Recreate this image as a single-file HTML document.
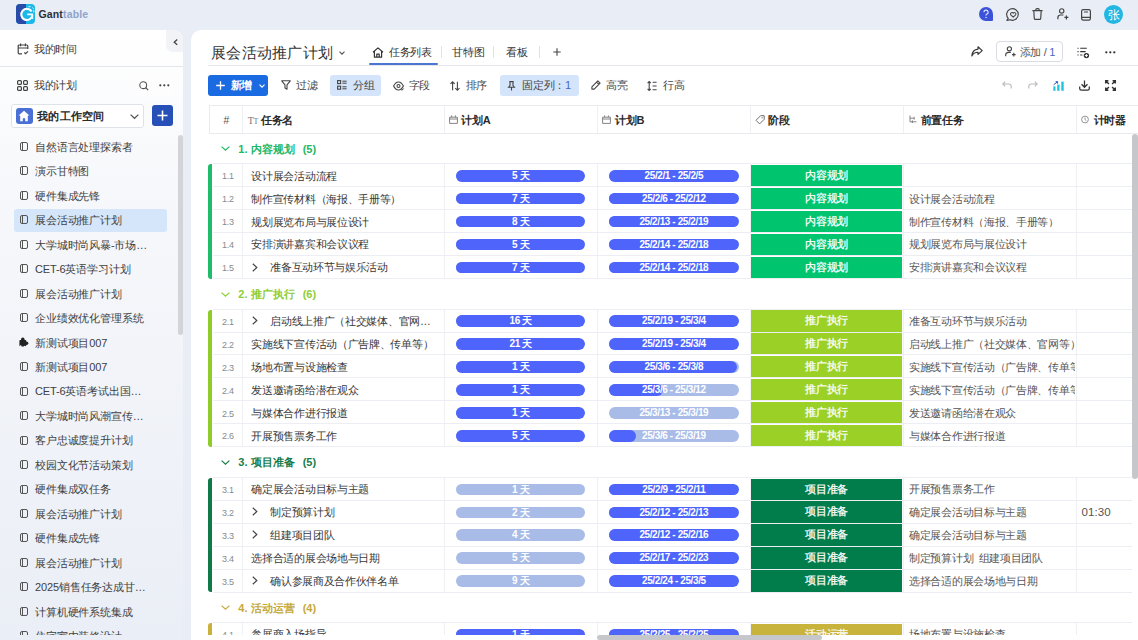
<!DOCTYPE html>
<html><head><meta charset="utf-8">
<style>
*{box-sizing:border-box;margin:0;padding:0}
html,body{width:1138px;height:640px;overflow:hidden}
body{position:relative;background:#e9edf5;font-family:"Liberation Sans",sans-serif;color:#333;font-size:11px}
.a{position:absolute}
svg{position:absolute;overflow:visible}
.t{position:absolute;white-space:nowrap;line-height:1;letter-spacing:-0.3px}
/* sidebar */
#side{left:0;top:30px;width:183.3px;height:610px;border-top-right-radius:9px;background:linear-gradient(180deg,#ffffff 0%,#f7f8fb 25%,#eaeef6 100%);overflow:hidden}
#main{left:190.8px;top:30px;width:947.2px;height:610px;border-top-left-radius:10px;background:#fff;overflow:hidden}
.si{position:absolute;left:0;width:183px;height:24.5px}
.si .ic{position:absolute;left:19.5px;top:7.5px;width:8px;height:9px;border:1.3px solid #555;border-radius:2px}
.si .ic:after{content:"";position:absolute;left:1.5px;top:0;width:1.2px;height:100%;background:#555}
.si .tx{position:absolute;left:35px;top:7.3px;font-size:11px;color:#404040;white-space:nowrap;line-height:1;letter-spacing:-0.15px}
.tb{position:absolute;font-size:11.5px;color:#333;white-space:nowrap;line-height:1}
.th{font-size:11px;font-weight:700;color:#2a2a2a}
.gh{font-size:11px;font-weight:bold;letter-spacing:0}
.gn{margin-left:2px}
.num{font-size:9px;color:#8a8a8a}
.nm{font-size:10.8px;color:#383838}
.pre{font-size:10.8px;color:#555}
.tm{font-size:11.5px;color:#555;letter-spacing:0.1px}
.bar{height:11.5px;border-radius:6px;background:#a9bce8;overflow:hidden}
.bar .fill{position:absolute;left:0;top:0;height:100%;background:#4e64fb;border-radius:0 6px 6px 0}
.bar .bt{position:absolute;left:0;top:0;width:100%;text-align:center;font-size:10px;line-height:11.5px;font-weight:bold;color:#fff;white-space:nowrap;letter-spacing:-0.4px}
.stg{font-size:11px;font-weight:500;color:#fff;text-align:center;line-height:21px;white-space:nowrap;letter-spacing:-0.3px;-webkit-text-stroke:0.25px #fff}
</style></head><body>

<!-- top bar -->
<div class="a" style="left:15.5px;top:4.2px;width:19.8px;height:19.4px;border-radius:4px;overflow:hidden;background:#1cb8e8">
  <div class="a" style="left:0;top:0;width:10px;height:19.4px;background:#2a4aa8"></div>
  <svg width="20" height="20" viewBox="0 0 20 20" style="left:0;top:0"><circle cx="10.8" cy="10.6" r="5" fill="#1cb8e8"/><path d="M15.6 7.4A5.6 5.6 0 1 0 16.4 11.4" fill="none" stroke="#fff" stroke-width="2.1"/><path d="M11.2 10.4H16.2V15" fill="none" stroke="#f0fbff" stroke-width="1.9"/><path d="M12.4 2.6H14.6M16.4 3.4L17.6 4.8M17.8 6.2V8.4" stroke="#e8f8ff" stroke-width="0.9"/></svg>
</div>
<div class="t" style="left:38.5px;top:9px;font-size:10.5px;font-weight:bold;color:#2b2f3a;letter-spacing:0.15px">Gant<span style="color:#8fa3cc">table</span></div>



<!-- top right icons -->
<div class="a" style="left:978.8px;top:7px;width:14px;height:14px;border-radius:7px 7px 1px 7px;background:#3c52d9"></div><svg width="14" height="14" viewBox="0 0 14 14" style="left:978.8px;top:7px"><path d="M4.9 5.2A2.1 2.1 0 1 1 7.6 7.2C7.1 7.5 7 7.9 7 8.6" fill="none" stroke="#dfe6ff" stroke-width="1.2"/><circle cx="7" cy="10.6" r="0.75" fill="#dfe6ff"/></svg>
<svg width="14" height="13" viewBox="0 0 14 13" style="left:1006px;top:7.6px"><path d="M2.2 10.4A5.8 5.8 0 1 1 4.2 11.8L0.9 12.4Z" fill="none" stroke="#444" stroke-width="1.15" stroke-linejoin="round"/><path d="M7.2 9.2L4.8 6.9A1.4 1.4 0 1 1 7.2 5.2A1.4 1.4 0 1 1 9.6 6.9Z" fill="none" stroke="#444" stroke-width="1.05" stroke-linejoin="round"/></svg>
<svg width="11" height="12" viewBox="0 0 11 12" style="left:1031.6px;top:8px"><path d="M0.4 2.6H10.6M3.8 2.6V1.6A1.1 1.1 0 0 1 4.9 0.6H6.1A1.1 1.1 0 0 1 7.2 1.6V2.6M1.8 2.6L2.3 10.6A0.9 0.9 0 0 0 3.2 11.4H7.8A0.9 0.9 0 0 0 8.7 10.6L9.2 2.6" fill="none" stroke="#444" stroke-width="1.15" stroke-linejoin="round"/></svg>
<svg width="12" height="12" viewBox="0 0 12 12" style="left:1057px;top:8.3px"><circle cx="4.7" cy="2.9" r="2.2" fill="none" stroke="#444" stroke-width="1.15"/><path d="M0.9 11.2V9.6C0.9 8 2.1 7 3.6 7H6.4M7.4 9.4H11.4M9.4 7.4V11.4" fill="none" stroke="#444" stroke-width="1.2"/></svg>
<svg width="10" height="12" viewBox="0 0 10 12" style="left:1081px;top:8.5px"><rect x="0.6" y="0.6" width="8.8" height="10.6" rx="1.6" fill="none" stroke="#444" stroke-width="1.2"/><path d="M0.6 8.4H9.4M3 3H7" stroke="#444" stroke-width="1.15"/></svg>
<div class="a" style="left:1103.8px;top:4.6px;width:19.4px;height:19.4px;border-radius:50%;background:#22b6e2"></div>
<div class="t" style="left:1107.5px;top:8.5px;font-size:12px;color:#fff;letter-spacing:0">张</div>

<div id="side" class="a">
  <!-- collapse -->
  <div class="a" style="left:166px;top:0;width:17.3px;height:22.4px;background:#f1f3f7;border-bottom-left-radius:7px"></div>
  <svg width="6" height="7" viewBox="0 0 6 7" style="left:173.4px;top:9.3px"><path d="M4.2 0.6L1.2 3.2L4.2 5.8" fill="none" stroke="#444" stroke-width="1.3"/></svg>
  <!-- my time -->
  <svg width="12" height="12" viewBox="0 0 12 12" style="left:16.5px;top:13px"><path d="M5 10.8H2.2a1 1 0 0 1-1-1V3a1 1 0 0 1 1-1h7.6a1 1 0 0 1 1 1v3M1.2 5h9.6M3.6 0.6v2.6M8.4 0.6v2.6M7.3 9.5l1.3 1.2l2.4-2.4" fill="none" stroke="#444" stroke-width="1.2"/></svg>
  <div class="t" style="left:34px;top:14px;font-size:11px;color:#3a3a3a">我的时间</div>
  <div class="a" style="left:0;top:36px;width:183.3px;height:1px;background:#e3e6ec"></div>
  <!-- my plan -->
  <svg width="11" height="11" viewBox="0 0 11 11" style="left:16.7px;top:50.3px"><rect x="0.6" y="0.6" width="3.8" height="3.8" rx="1" fill="none" stroke="#444" stroke-width="1.2"/><rect x="6.6" y="0.6" width="3.8" height="3.8" rx="1" fill="none" stroke="#444" stroke-width="1.2"/><rect x="0.6" y="6.6" width="3.8" height="3.8" rx="1" fill="none" stroke="#444" stroke-width="1.2"/><rect x="6.6" y="6.6" width="3.8" height="3.8" rx="1" fill="none" stroke="#444" stroke-width="1.2"/></svg>
  <div class="t" style="left:34px;top:50.3px;font-size:11px;color:#3a3a3a">我的计划</div>
  <div class="a" style="left:136px;top:44px;width:36.5px;height:22.7px;background:#fdfdfe;border-radius:3px"></div>
  <svg width="10" height="10" viewBox="0 0 10 10" style="left:139px;top:50.8px"><circle cx="4.2" cy="4.2" r="3.4" fill="none" stroke="#555" stroke-width="1.1"/><path d="M6.7 6.7L9.2 9.2" stroke="#555" stroke-width="1.2"/></svg>
  <svg width="11" height="3" viewBox="0 0 11 3" style="left:159px;top:54.3px"><circle cx="1.3" cy="1.3" r="1.1" fill="#444"/><circle cx="5.3" cy="1.3" r="1.1" fill="#444"/><circle cx="9.3" cy="1.3" r="1.1" fill="#444"/></svg>
  <!-- workspace -->
  <div class="a" style="left:11.3px;top:74px;width:133px;height:23.5px;border:1px solid #dfe2e8;border-radius:3px;background:#fff"></div>
  <div class="a" style="left:16px;top:77.5px;width:16.5px;height:16.5px;border-radius:3px;background:#4a70d6"></div>
  <svg width="12" height="12" viewBox="0 0 12 12" style="left:18.3px;top:79.6px"><path d="M6 0.8L0.6 5.6H2.2V11.2H4.8V8.2H7.2V11.2H9.8V5.6H11.4Z" fill="#fff"/></svg>
  <div class="t" style="left:37px;top:80.6px;font-size:11.3px;font-weight:600;color:#2a2a2a;letter-spacing:0.3px">我的工作空间</div>
  <svg width="9" height="5" viewBox="0 0 9 5" style="left:129.8px;top:83.5px"><path d="M0.6 0.6L4.5 4.3L8.4 0.6" fill="none" stroke="#555" stroke-width="1.2"/></svg>
  <div class="a" style="left:151.5px;top:75.4px;width:21px;height:21px;border-radius:3px;background:#2650b8"></div>
  <svg width="11" height="11" viewBox="0 0 11 11" style="left:156.5px;top:80.4px"><path d="M5.5 0.5V10.5M0.5 5.5H10.5" stroke="#fff" stroke-width="1.6"/></svg>
  <!-- scrollbar -->
  <div class="a" style="left:177.5px;top:104.6px;width:5.8px;height:200.5px;border-radius:3px;background:#d3d4d7"></div>
  <div class="a" style="left:0;top:104px;width:177px;height:500.7px;overflow:hidden">
  <div class="a" style="left:0;top:-104px;width:183px;height:700px">
<div class="si" style="top:104.45px"><div class="ic"></div><div class="tx">自然语言处理探索者</div></div>
<div class="si" style="top:128.92px"><div class="ic"></div><div class="tx">演示甘特图</div></div>
<div class="si" style="top:153.39px"><div class="ic"></div><div class="tx">硬件集成先锋</div></div>
<div class="si" style="top:177.86px"><div class="a" style="left:14.2px;top:1px;width:152.5px;height:23.5px;background:#d5e6fb;border-radius:3px"></div><div class="ic"></div><div class="tx">展会活动推广计划</div></div>
<div class="si" style="top:202.33px"><div class="ic"></div><div class="tx">大学城时尚风暴-市场…</div></div>
<div class="si" style="top:226.80px"><div class="ic"></div><div class="tx">CET-6英语学习计划</div></div>
<div class="si" style="top:251.27px"><div class="ic"></div><div class="tx">展会活动推广计划</div></div>
<div class="si" style="top:275.74px"><div class="ic"></div><div class="tx">企业绩效优化管理系统</div></div>
<div class="si" style="top:300.21px"><svg width="10" height="10" viewBox="0 0 10 10" style="left:19px;top:6.8px"><rect x="0.4" y="3" width="6.8" height="6.4" rx="0.8" fill="#222"/><circle cx="3.8" cy="2.4" r="1.8" fill="#222"/><circle cx="7.6" cy="6.2" r="1.7" fill="#222"/><circle cx="1.6" cy="9.2" r="1" fill="#f1f3f8"/><circle cx="5.8" cy="9.6" r="0.9" fill="#f1f3f8"/></svg><div class="tx">新测试项目007</div></div>
<div class="si" style="top:324.68px"><div class="ic"></div><div class="tx">新测试项目007</div></div>
<div class="si" style="top:349.15px"><div class="ic"></div><div class="tx">CET-6英语考试出国…</div></div>
<div class="si" style="top:373.62px"><div class="ic"></div><div class="tx">大学城时尚风潮宣传…</div></div>
<div class="si" style="top:398.09px"><div class="ic"></div><div class="tx">客户忠诚度提升计划</div></div>
<div class="si" style="top:422.56px"><div class="ic"></div><div class="tx">校园文化节活动策划</div></div>
<div class="si" style="top:447.03px"><div class="ic"></div><div class="tx">硬件集成双任务</div></div>
<div class="si" style="top:471.50px"><div class="ic"></div><div class="tx">展会活动推广计划</div></div>
<div class="si" style="top:495.97px"><div class="ic"></div><div class="tx">硬件集成先锋</div></div>
<div class="si" style="top:520.44px"><div class="ic"></div><div class="tx">展会活动推广计划</div></div>
<div class="si" style="top:544.91px"><div class="ic"></div><div class="tx">2025销售任务达成甘…</div></div>
<div class="si" style="top:569.38px"><div class="ic"></div><div class="tx">计算机硬件系统集成</div></div>
<div class="si" style="top:593.85px"><div class="ic"></div><div class="tx">住宅室内装修设计</div></div>
  </div></div>
</div>

<div id="main" class="a"></div>

<!-- main header -->
<div class="t" style="left:211px;top:45px;font-size:15px;color:#333;letter-spacing:0.3px">展会活动推广计划</div>
<svg width="6" height="4" viewBox="0 0 6 4" style="left:338.6px;top:51px"><path d="M0.5 0.6L3 3.2L5.5 0.6" fill="none" stroke="#555" stroke-width="1.1"/></svg>
<div class="a" style="left:208px;top:64.5px;width:930px;height:1px;background:#e4e6ec"></div>
<div class="a" style="left:368.7px;top:62.8px;width:69.3px;height:2.2px;background:#4a76d2;border-radius:1px"></div>
<svg width="12" height="11" viewBox="0 0 12 11" style="left:371.5px;top:46.5px"><path d="M1 5.2L6 0.9L11 5.2M2.4 4.2V10.2H9.6V4.2M4.8 10.2V7.2H7.2V10.2" fill="none" stroke="#333" stroke-width="1.2" stroke-linejoin="round"/></svg>
<div class="t" style="left:389px;top:46.6px;font-size:11px;color:#333">任务列表</div>
<div class="a" style="left:441.4px;top:46px;width:1px;height:12px;background:#e2e2e6"></div>
<div class="t" style="left:452.3px;top:46.6px;font-size:11px;color:#333">甘特图</div>
<div class="a" style="left:493.3px;top:46px;width:1px;height:12px;background:#e2e2e6"></div>
<div class="t" style="left:506.2px;top:46.6px;font-size:11px;color:#333">看板</div>
<div class="a" style="left:539.3px;top:46px;width:1px;height:12px;background:#e2e2e6"></div>
<svg width="8" height="8" viewBox="0 0 8 8" style="left:553px;top:48px"><path d="M4 0.3V7.7M0.3 4H7.7" stroke="#444" stroke-width="1.1"/></svg>

<svg width="12" height="11" viewBox="0 0 12 11" style="left:970.7px;top:46.2px"><path d="M7 0.8L11.2 4.6L7 8.4V6.2C4 6.2 2.2 7.2 0.8 10C1.2 6 3.2 3.4 7 3.1Z" fill="none" stroke="#333" stroke-width="1.15" stroke-linejoin="round"/></svg>
<div class="a" style="left:996.3px;top:41px;width:66.6px;height:21.4px;border:1px solid #d9dce3;border-radius:4px"></div>
<svg width="11" height="11" viewBox="0 0 11 11" style="left:1005.2px;top:46.3px"><circle cx="4.4" cy="2.8" r="2.1" fill="none" stroke="#444" stroke-width="1.1"/><path d="M0.7 10.3V8.8C0.7 7.3 2 6.4 3.6 6.4H5.8M7 8.6H10.6M8.8 6.8V10.4" fill="none" stroke="#444" stroke-width="1.1"/></svg>
<div class="t" style="left:1019.5px;top:46.6px;font-size:11px;color:#555">添加 / <span style="color:#4a66c8">1</span></div>
<svg width="13" height="12" viewBox="0 0 13 12" style="left:1077px;top:47px"><path d="M0.5 1.2H1.6M3.2 1.2H9.8M0.5 4.6H1.6M3.2 4.6H8.6M0.5 8H1.6M3.2 8H5.4" stroke="#333" stroke-width="1.1"/><circle cx="9.4" cy="8.6" r="2.7" fill="#333"/><path d="M9.4 7.1V10.1M7.9 8.6H10.9" stroke="#fff" stroke-width="1"/></svg>
<svg width="11" height="3" viewBox="0 0 11 3" style="left:1105.2px;top:51px"><circle cx="1.3" cy="1.3" r="1.15" fill="#333"/><circle cx="5.3" cy="1.3" r="1.15" fill="#333"/><circle cx="9.3" cy="1.3" r="1.15" fill="#333"/></svg>

<!-- toolbar -->
<div class="a" style="left:208px;top:75px;width:60.1px;height:20.8px;background:#1a6ae2;border-radius:3px"></div>
<svg width="9" height="9" viewBox="0 0 9 9" style="left:215.6px;top:81px"><path d="M4.5 0.2V8.8M0.2 4.5H8.8" stroke="#fff" stroke-width="1.3"/></svg>
<div class="t" style="left:230.5px;top:80px;font-size:11px;font-weight:600;color:#fff">新增</div>
<svg width="6" height="4" viewBox="0 0 6 4" style="left:258.8px;top:84px"><path d="M0.5 0.6L3 3.1L5.5 0.6" fill="none" stroke="#fff" stroke-width="1.1"/></svg>

<svg width="10" height="10" viewBox="0 0 10 10" style="left:280.6px;top:80.4px"><path d="M0.7 0.8H9.3L6 4.8V9.2L4 8V4.8Z" fill="none" stroke="#444" stroke-width="1.1" stroke-linejoin="round"/></svg>
<div class="t" style="left:296px;top:80px;font-size:11px;color:#444">过滤</div>

<div class="a" style="left:329.7px;top:75px;width:51.7px;height:21px;background:#d4e4fa;border-radius:3px"></div>
<svg width="10" height="10" viewBox="0 0 10 10" style="left:337px;top:80.4px"><rect x="0.6" y="0.6" width="3" height="3" fill="none" stroke="#444" stroke-width="1.1"/><rect x="0.6" y="6.2" width="3" height="3" fill="none" stroke="#444" stroke-width="1.1"/><path d="M5.4 1.2H9.6M5.4 3.2H9.6M5.4 6.8H9.6M5.4 8.8H9.6" stroke="#444" stroke-width="1"/></svg>
<div class="t" style="left:353px;top:80px;font-size:11px;color:#444">分组</div>

<svg width="11" height="10" viewBox="0 0 11 10" style="left:393px;top:80.6px"><path d="M0.6 5C2 2.3 3.8 1 5.5 1S9 2.3 10.4 5C9 7.7 7.2 9 5.5 9S2 7.7 0.6 5Z" fill="none" stroke="#444" stroke-width="1.1"/><circle cx="5.5" cy="5" r="1.5" fill="none" stroke="#444" stroke-width="1.1"/><path d="M7.8 8.2L8.9 9.3L10.6 7.5" fill="none" stroke="#444" stroke-width="1"/></svg>
<div class="t" style="left:408.8px;top:80px;font-size:11px;color:#444">字段</div>

<svg width="10" height="10" viewBox="0 0 10 10" style="left:450px;top:80.5px"><path d="M2.6 9.3V0.8M0.5 2.9L2.6 0.8L4.7 2.9M7.4 0.8V9.3M5.3 7.2L7.4 9.3L9.5 7.2" fill="none" stroke="#444" stroke-width="1.1"/></svg>
<div class="t" style="left:465.5px;top:80px;font-size:11px;color:#444">排序</div>

<div class="a" style="left:499.5px;top:75px;width:79.3px;height:21px;background:#d4e4fa;border-radius:3px"></div>
<svg width="7" height="10" viewBox="0 0 7 10" style="left:507.8px;top:80.5px"><path d="M1.3 0.6H5.7M2 0.6V4.6L0.6 6.2H6.4L5 4.6V0.6M3.5 6.2V9.6" fill="none" stroke="#444" stroke-width="1.1"/></svg>
<div class="t" style="left:522.3px;top:80px;font-size:11px;color:#444">固定列：<span style="color:#4a66c8">1</span></div>

<svg width="10" height="10" viewBox="0 0 10 10" style="left:590.8px;top:80.4px"><path d="M6.8 0.9L9.1 3.2L3.2 9.1H0.9V6.8Z M5.6 2.1L7.9 4.4" fill="none" stroke="#444" stroke-width="1.1" stroke-linejoin="round"/></svg>
<div class="t" style="left:606px;top:80px;font-size:11px;color:#444">高亮</div>

<svg width="10" height="10" viewBox="0 0 10 10" style="left:647px;top:80.5px"><path d="M2.2 0.6V9.4M0.6 2.2L2.2 0.6L3.8 2.2M0.6 7.8L2.2 9.4L3.8 7.8M5.6 1.2H9.6M5.6 5H9.6M5.6 8.8H9.6" fill="none" stroke="#444" stroke-width="1.1"/></svg>
<div class="t" style="left:663px;top:80px;font-size:11px;color:#444">行高</div>

<svg width="10" height="8" viewBox="0 0 10 8" style="left:1001.8px;top:81.3px"><path d="M3.2 0.6L0.8 3L3.2 5.4M0.8 3H6.6C8.2 3 9.2 4 9.2 5.4V7.6" fill="none" stroke="#bbb" stroke-width="1.1"/></svg>
<svg width="10" height="8" viewBox="0 0 10 8" style="left:1027.5px;top:81.3px"><path d="M6.8 0.6L9.2 3L6.8 5.4M9.2 3H3.4C1.8 3 0.8 4 0.8 5.4V7.6" fill="none" stroke="#bbb" stroke-width="1.1"/></svg>
<svg width="11" height="10" viewBox="0 0 11 10" style="left:1053.2px;top:80.6px"><rect x="0.3" y="5.4" width="2.2" height="4.4" fill="#22c4dc"/><rect x="4.2" y="3.6" width="2.3" height="6.2" fill="#22c4dc"/><rect x="8.3" y="0.6" width="2.4" height="9.2" fill="#22c4dc"/><path d="M0.6 3.8L4.4 0.9M2.6 0.7H4.6V2.7" fill="none" stroke="#3050c0" stroke-width="1"/></svg>
<svg width="11" height="11" viewBox="0 0 11 11" style="left:1079px;top:80.3px"><path d="M5.5 0.4V7.2M2.5 4.3L5.5 7.3L8.5 4.3M0.7 6.6V8.6A1.6 1.6 0 0 0 2.3 10.2H8.7A1.6 1.6 0 0 0 10.3 8.6V6.6" fill="none" stroke="#333" stroke-width="1.25"/></svg>
<svg width="11" height="11" viewBox="0 0 11 11" style="left:1105.2px;top:80.3px"><path d="M0.7 3.4V0.7H3.4M0.7 0.7L3.9 3.9M10.3 3.4V0.7H7.6M10.3 0.7L7.1 3.9M0.7 7.6V10.3H3.4M0.7 10.3L3.9 7.1M10.3 7.6V10.3H7.6M10.3 10.3L7.1 7.1" fill="none" stroke="#333" stroke-width="1.45"/></svg>

<!--TABLE-->
<div class="a" style="left:0;top:0;width:1138px;height:635.4px;overflow:hidden">
<div class="a" style="left:208.6px;top:105.4px;width:929.4px;height:28.3px;border:1px solid #eaebef;border-right:none;background:#fff"></div>
<div class="a" style="left:242.3px;top:105.4px;width:1px;height:27.8px;background:#eeeff2"></div>
<div class="a" style="left:443.6px;top:105.4px;width:1px;height:27.8px;background:#eeeff2"></div>
<div class="a" style="left:596.7px;top:105.4px;width:1px;height:27.8px;background:#eeeff2"></div>
<div class="a" style="left:749.8px;top:105.4px;width:1px;height:27.8px;background:#eeeff2"></div>
<div class="a" style="left:902.8px;top:105.4px;width:1px;height:27.8px;background:#eeeff2"></div>
<div class="a" style="left:1075.8px;top:105.4px;width:1px;height:27.8px;background:#eeeff2"></div>
<div class="t" style="left:223.2px;top:115.2px;font-size:10.5px;color:#555;font-style:italic">#</div>
<div class="t" style="left:247.8px;top:115.6px;font-size:10px;color:#777;font-family:'Liberation Serif',serif">T<span style="font-size:8px">T</span></div>
<div class="t th" style="left:261px;top:115.2px">任务名</div>
<svg width="9" height="9" viewBox="0 0 9 9" style="left:449.0px;top:115.2px"><path d="M0.6 2.2H8.4V8.4H0.6Z M0.6 4H8.4 M2.6 0.4V2.2 M6.4 0.4V2.2" fill="none" stroke="#777" stroke-width="0.9"/></svg>
<div class="t th" style="left:461.3px;top:115.2px">计划A</div>
<svg width="9" height="9" viewBox="0 0 9 9" style="left:602.0px;top:115.2px"><path d="M0.6 2.2H8.4V8.4H0.6Z M0.6 4H8.4 M2.6 0.4V2.2 M6.4 0.4V2.2" fill="none" stroke="#777" stroke-width="0.9"/></svg>
<div class="t th" style="left:615.2px;top:115.2px">计划B</div>
<svg width="10" height="10" viewBox="0 0 10 10" style="left:754.8px;top:115px"><path d="M5.6 0.7H9.2V4.3L4.6 8.9L1 5.3Z" fill="none" stroke="#666" stroke-width="0.95" stroke-linejoin="round"/><circle cx="7.1" cy="2.8" r="0.65" fill="#666"/></svg>
<div class="t th" style="left:768px;top:115.2px">阶段</div>
<svg width="8" height="8" viewBox="0 0 8 8" style="left:908.8px;top:115.2px"><path d="M1 0.5V6.8H7.4M1 3.2H5.2M5.2 1.8V4.6M3.4 5.4V8" fill="none" stroke="#777" stroke-width="0.9"/></svg>
<div class="t th" style="left:920.7px;top:115.2px">前置任务</div>
<svg width="8" height="9" viewBox="0 0 8 9" style="left:1081.3px;top:115.2px"><circle cx="4" cy="4.5" r="3.4" fill="none" stroke="#888" stroke-width="0.9"/><path d="M4 2.6V4.6L5.3 5.6" fill="none" stroke="#888" stroke-width="0.9"/></svg>
<div class="t th" style="left:1093.7px;top:115.2px">计时器</div>
<svg width="9" height="5" viewBox="0 0 9 5" style="left:220.7px;top:146.28px"><path d="M0.6 0.6L4.5 4.2L8.4 0.6" fill="none" stroke="#21b766" stroke-width="1.2"/></svg>
<div class="t gh" style="left:238.3px;top:143.67px;color:#21b766">1. 内容规划&nbsp;&nbsp;<span class="gn">(5)</span></div>
<div class="a" style="left:212.5px;top:163.25px;width:919.5px;height:1px;background:#eceef3"></div>
<div class="a" style="left:242.3px;top:163.75px;width:1px;height:22.95px;background:#eff0f3"></div>
<div class="a" style="left:443.6px;top:163.75px;width:1px;height:22.95px;background:#eff0f3"></div>
<div class="a" style="left:596.7px;top:163.75px;width:1px;height:22.95px;background:#eff0f3"></div>
<div class="a" style="left:749.8px;top:163.75px;width:1px;height:22.95px;background:#eff0f3"></div>
<div class="a" style="left:902.8px;top:163.75px;width:1px;height:22.95px;background:#eff0f3"></div>
<div class="a" style="left:1075.8px;top:163.75px;width:1px;height:22.95px;background:#eff0f3"></div>
<div class="t num" style="left:222px;top:172.42px">1.1</div>
<div class="t nm" style="left:251.4px;top:170.62px">设计展会活动流程</div>
<div class="a bar" style="left:455.8px;top:170.03px;width:129.7px"><div class="fill" style="width:100.0%"></div><div class="bt">5 天</div></div>
<div class="a bar" style="left:609.0px;top:170.03px;width:129.7px"><div class="fill" style="width:100.0%"></div><div class="bt">25/2/1 - 25/2/5</div></div>
<div class="a stg" style="left:751px;top:164.95px;width:151.2px;height:21.25px;background:#00c46e">内容规划</div>
<div class="a" style="left:212.5px;top:186.20px;width:919.5px;height:1px;background:#eceef3"></div>
<div class="a" style="left:242.3px;top:186.70px;width:1px;height:22.95px;background:#eff0f3"></div>
<div class="a" style="left:443.6px;top:186.70px;width:1px;height:22.95px;background:#eff0f3"></div>
<div class="a" style="left:596.7px;top:186.70px;width:1px;height:22.95px;background:#eff0f3"></div>
<div class="a" style="left:749.8px;top:186.70px;width:1px;height:22.95px;background:#eff0f3"></div>
<div class="a" style="left:902.8px;top:186.70px;width:1px;height:22.95px;background:#eff0f3"></div>
<div class="a" style="left:1075.8px;top:186.70px;width:1px;height:22.95px;background:#eff0f3"></div>
<div class="t num" style="left:222px;top:195.37px">1.2</div>
<div class="t nm" style="left:251.4px;top:193.57px">制作宣传材料（海报、手册等）</div>
<div class="a bar" style="left:455.8px;top:192.97px;width:129.7px"><div class="fill" style="width:100.0%"></div><div class="bt">7 天</div></div>
<div class="a bar" style="left:609.0px;top:192.97px;width:129.7px"><div class="fill" style="width:100.0%"></div><div class="bt">25/2/6 - 25/2/12</div></div>
<div class="a stg" style="left:751px;top:187.90px;width:151.2px;height:21.25px;background:#00c46e">内容规划</div>
<div class="t pre" style="left:909px;top:193.57px;width:166px;overflow:hidden">设计展会活动流程</div>
<div class="a" style="left:212.5px;top:209.15px;width:919.5px;height:1px;background:#eceef3"></div>
<div class="a" style="left:242.3px;top:209.65px;width:1px;height:22.95px;background:#eff0f3"></div>
<div class="a" style="left:443.6px;top:209.65px;width:1px;height:22.95px;background:#eff0f3"></div>
<div class="a" style="left:596.7px;top:209.65px;width:1px;height:22.95px;background:#eff0f3"></div>
<div class="a" style="left:749.8px;top:209.65px;width:1px;height:22.95px;background:#eff0f3"></div>
<div class="a" style="left:902.8px;top:209.65px;width:1px;height:22.95px;background:#eff0f3"></div>
<div class="a" style="left:1075.8px;top:209.65px;width:1px;height:22.95px;background:#eff0f3"></div>
<div class="t num" style="left:222px;top:218.32px">1.3</div>
<div class="t nm" style="left:251.4px;top:216.52px">规划展览布局与展位设计</div>
<div class="a bar" style="left:455.8px;top:215.92px;width:129.7px"><div class="fill" style="width:100.0%"></div><div class="bt">8 天</div></div>
<div class="a bar" style="left:609.0px;top:215.92px;width:129.7px"><div class="fill" style="width:100.0%"></div><div class="bt">25/2/13 - 25/2/19</div></div>
<div class="a stg" style="left:751px;top:210.85px;width:151.2px;height:21.25px;background:#00c46e">内容规划</div>
<div class="t pre" style="left:909px;top:216.52px;width:166px;overflow:hidden">制作宣传材料（海报、手册等）</div>
<div class="a" style="left:212.5px;top:232.10px;width:919.5px;height:1px;background:#eceef3"></div>
<div class="a" style="left:242.3px;top:232.60px;width:1px;height:22.95px;background:#eff0f3"></div>
<div class="a" style="left:443.6px;top:232.60px;width:1px;height:22.95px;background:#eff0f3"></div>
<div class="a" style="left:596.7px;top:232.60px;width:1px;height:22.95px;background:#eff0f3"></div>
<div class="a" style="left:749.8px;top:232.60px;width:1px;height:22.95px;background:#eff0f3"></div>
<div class="a" style="left:902.8px;top:232.60px;width:1px;height:22.95px;background:#eff0f3"></div>
<div class="a" style="left:1075.8px;top:232.60px;width:1px;height:22.95px;background:#eff0f3"></div>
<div class="t num" style="left:222px;top:241.27px">1.4</div>
<div class="t nm" style="left:251.4px;top:239.47px">安排演讲嘉宾和会议议程</div>
<div class="a bar" style="left:455.8px;top:238.87px;width:129.7px"><div class="fill" style="width:100.0%"></div><div class="bt">5 天</div></div>
<div class="a bar" style="left:609.0px;top:238.87px;width:129.7px"><div class="fill" style="width:100.0%"></div><div class="bt">25/2/14 - 25/2/18</div></div>
<div class="a stg" style="left:751px;top:233.80px;width:151.2px;height:21.25px;background:#00c46e">内容规划</div>
<div class="t pre" style="left:909px;top:239.47px;width:166px;overflow:hidden">规划展览布局与展位设计</div>
<div class="a" style="left:212.5px;top:255.05px;width:919.5px;height:1px;background:#eceef3"></div>
<div class="a" style="left:242.3px;top:255.55px;width:1px;height:22.95px;background:#eff0f3"></div>
<div class="a" style="left:443.6px;top:255.55px;width:1px;height:22.95px;background:#eff0f3"></div>
<div class="a" style="left:596.7px;top:255.55px;width:1px;height:22.95px;background:#eff0f3"></div>
<div class="a" style="left:749.8px;top:255.55px;width:1px;height:22.95px;background:#eff0f3"></div>
<div class="a" style="left:902.8px;top:255.55px;width:1px;height:22.95px;background:#eff0f3"></div>
<div class="a" style="left:1075.8px;top:255.55px;width:1px;height:22.95px;background:#eff0f3"></div>
<div class="t num" style="left:222px;top:264.22px">1.5</div>
<svg width="6" height="9" viewBox="0 0 6 9" style="left:251.8px;top:262.72px"><path d="M0.8 0.7L4.8 4.5L0.8 8.3" fill="none" stroke="#444" stroke-width="1.2"/></svg>
<div class="t nm" style="left:270.2px;top:262.42px">准备互动环节与娱乐活动</div>
<div class="a bar" style="left:455.8px;top:261.82px;width:129.7px"><div class="fill" style="width:100.0%"></div><div class="bt">7 天</div></div>
<div class="a bar" style="left:609.0px;top:261.82px;width:129.7px"><div class="fill" style="width:100.0%"></div><div class="bt">25/2/14 - 25/2/18</div></div>
<div class="a stg" style="left:751px;top:256.75px;width:151.2px;height:21.25px;background:#00c46e">内容规划</div>
<div class="t pre" style="left:909px;top:262.42px;width:166px;overflow:hidden">安排演讲嘉宾和会议议程</div>
<div class="a" style="left:212.5px;top:278.00px;width:919.5px;height:1px;background:#eceef3"></div>
<div class="a" style="left:208.4px;top:164.25px;width:4.1px;height:114.25px;background:#1fbd69;border-radius:3px 0 0 3px"></div>
<svg width="9" height="5" viewBox="0 0 9 5" style="left:220.7px;top:291.57px"><path d="M0.6 0.6L4.5 4.2L8.4 0.6" fill="none" stroke="#8ecd35" stroke-width="1.2"/></svg>
<div class="t gh" style="left:238.3px;top:288.97px;color:#8ecd35">2. 推广执行&nbsp;&nbsp;<span class="gn">(6)</span></div>
<div class="a" style="left:212.5px;top:308.55px;width:919.5px;height:1px;background:#eceef3"></div>
<div class="a" style="left:242.3px;top:309.05px;width:1px;height:22.95px;background:#eff0f3"></div>
<div class="a" style="left:443.6px;top:309.05px;width:1px;height:22.95px;background:#eff0f3"></div>
<div class="a" style="left:596.7px;top:309.05px;width:1px;height:22.95px;background:#eff0f3"></div>
<div class="a" style="left:749.8px;top:309.05px;width:1px;height:22.95px;background:#eff0f3"></div>
<div class="a" style="left:902.8px;top:309.05px;width:1px;height:22.95px;background:#eff0f3"></div>
<div class="a" style="left:1075.8px;top:309.05px;width:1px;height:22.95px;background:#eff0f3"></div>
<div class="t num" style="left:222px;top:317.72px">2.1</div>
<svg width="6" height="9" viewBox="0 0 6 9" style="left:251.8px;top:316.22px"><path d="M0.8 0.7L4.8 4.5L0.8 8.3" fill="none" stroke="#444" stroke-width="1.2"/></svg>
<div class="t nm" style="left:270.2px;top:315.92px">启动线上推广（社交媒体、官网…</div>
<div class="a bar" style="left:455.8px;top:315.32px;width:129.7px"><div class="fill" style="width:100.0%"></div><div class="bt">16 天</div></div>
<div class="a bar" style="left:609.0px;top:315.32px;width:129.7px"><div class="fill" style="width:100.0%"></div><div class="bt">25/2/19 - 25/3/4</div></div>
<div class="a stg" style="left:751px;top:310.25px;width:151.2px;height:21.25px;background:#9bd127">推广执行</div>
<div class="t pre" style="left:909px;top:315.92px;width:166px;overflow:hidden">准备互动环节与娱乐活动</div>
<div class="a" style="left:212.5px;top:331.50px;width:919.5px;height:1px;background:#eceef3"></div>
<div class="a" style="left:242.3px;top:332.00px;width:1px;height:22.95px;background:#eff0f3"></div>
<div class="a" style="left:443.6px;top:332.00px;width:1px;height:22.95px;background:#eff0f3"></div>
<div class="a" style="left:596.7px;top:332.00px;width:1px;height:22.95px;background:#eff0f3"></div>
<div class="a" style="left:749.8px;top:332.00px;width:1px;height:22.95px;background:#eff0f3"></div>
<div class="a" style="left:902.8px;top:332.00px;width:1px;height:22.95px;background:#eff0f3"></div>
<div class="a" style="left:1075.8px;top:332.00px;width:1px;height:22.95px;background:#eff0f3"></div>
<div class="t num" style="left:222px;top:340.67px">2.2</div>
<div class="t nm" style="left:251.4px;top:338.87px">实施线下宣传活动（广告牌、传单等）</div>
<div class="a bar" style="left:455.8px;top:338.27px;width:129.7px"><div class="fill" style="width:100.0%"></div><div class="bt">21 天</div></div>
<div class="a bar" style="left:609.0px;top:338.27px;width:129.7px"><div class="fill" style="width:100.0%"></div><div class="bt">25/2/19 - 25/3/4</div></div>
<div class="a stg" style="left:751px;top:333.20px;width:151.2px;height:21.25px;background:#9bd127">推广执行</div>
<div class="t pre" style="left:909px;top:338.87px;width:166px;overflow:hidden">启动线上推广（社交媒体、官网等）</div>
<div class="a" style="left:212.5px;top:354.45px;width:919.5px;height:1px;background:#eceef3"></div>
<div class="a" style="left:242.3px;top:354.95px;width:1px;height:22.95px;background:#eff0f3"></div>
<div class="a" style="left:443.6px;top:354.95px;width:1px;height:22.95px;background:#eff0f3"></div>
<div class="a" style="left:596.7px;top:354.95px;width:1px;height:22.95px;background:#eff0f3"></div>
<div class="a" style="left:749.8px;top:354.95px;width:1px;height:22.95px;background:#eff0f3"></div>
<div class="a" style="left:902.8px;top:354.95px;width:1px;height:22.95px;background:#eff0f3"></div>
<div class="a" style="left:1075.8px;top:354.95px;width:1px;height:22.95px;background:#eff0f3"></div>
<div class="t num" style="left:222px;top:363.62px">2.3</div>
<div class="t nm" style="left:251.4px;top:361.82px">场地布置与设施检查</div>
<div class="a bar" style="left:455.8px;top:361.22px;width:129.7px"><div class="fill" style="width:100.0%"></div><div class="bt">1 天</div></div>
<div class="a bar" style="left:609.0px;top:361.22px;width:129.7px"><div class="fill" style="width:99.0%"></div><div class="bt">25/3/6 - 25/3/8</div></div>
<div class="a stg" style="left:751px;top:356.15px;width:151.2px;height:21.25px;background:#9bd127">推广执行</div>
<div class="t pre" style="left:909px;top:361.82px;width:166px;overflow:hidden">实施线下宣传活动（广告牌、传单等）</div>
<div class="a" style="left:212.5px;top:377.40px;width:919.5px;height:1px;background:#eceef3"></div>
<div class="a" style="left:242.3px;top:377.90px;width:1px;height:22.95px;background:#eff0f3"></div>
<div class="a" style="left:443.6px;top:377.90px;width:1px;height:22.95px;background:#eff0f3"></div>
<div class="a" style="left:596.7px;top:377.90px;width:1px;height:22.95px;background:#eff0f3"></div>
<div class="a" style="left:749.8px;top:377.90px;width:1px;height:22.95px;background:#eff0f3"></div>
<div class="a" style="left:902.8px;top:377.90px;width:1px;height:22.95px;background:#eff0f3"></div>
<div class="a" style="left:1075.8px;top:377.90px;width:1px;height:22.95px;background:#eff0f3"></div>
<div class="t num" style="left:222px;top:386.57px">2.4</div>
<div class="t nm" style="left:251.4px;top:384.77px">发送邀请函给潜在观众</div>
<div class="a bar" style="left:455.8px;top:384.17px;width:129.7px"><div class="fill" style="width:100.0%"></div><div class="bt">1 天</div></div>
<div class="a bar" style="left:609.0px;top:384.17px;width:129.7px"><div class="fill" style="width:42.0%"></div><div class="bt">25/3/6 - 25/3/12</div></div>
<div class="a stg" style="left:751px;top:379.10px;width:151.2px;height:21.25px;background:#9bd127">推广执行</div>
<div class="t pre" style="left:909px;top:384.77px;width:166px;overflow:hidden">实施线下宣传活动（广告牌、传单等）</div>
<div class="a" style="left:212.5px;top:400.35px;width:919.5px;height:1px;background:#eceef3"></div>
<div class="a" style="left:242.3px;top:400.85px;width:1px;height:22.95px;background:#eff0f3"></div>
<div class="a" style="left:443.6px;top:400.85px;width:1px;height:22.95px;background:#eff0f3"></div>
<div class="a" style="left:596.7px;top:400.85px;width:1px;height:22.95px;background:#eff0f3"></div>
<div class="a" style="left:749.8px;top:400.85px;width:1px;height:22.95px;background:#eff0f3"></div>
<div class="a" style="left:902.8px;top:400.85px;width:1px;height:22.95px;background:#eff0f3"></div>
<div class="a" style="left:1075.8px;top:400.85px;width:1px;height:22.95px;background:#eff0f3"></div>
<div class="t num" style="left:222px;top:409.52px">2.5</div>
<div class="t nm" style="left:251.4px;top:407.72px">与媒体合作进行报道</div>
<div class="a bar" style="left:455.8px;top:407.12px;width:129.7px"><div class="fill" style="width:100.0%"></div><div class="bt">1 天</div></div>
<div class="a bar" style="left:609.0px;top:407.12px;width:129.7px"><div class="fill" style="width:0.0%"></div><div class="bt">25/3/13 - 25/3/19</div></div>
<div class="a stg" style="left:751px;top:402.05px;width:151.2px;height:21.25px;background:#9bd127">推广执行</div>
<div class="t pre" style="left:909px;top:407.72px;width:166px;overflow:hidden">发送邀请函给潜在观众</div>
<div class="a" style="left:212.5px;top:423.30px;width:919.5px;height:1px;background:#eceef3"></div>
<div class="a" style="left:242.3px;top:423.80px;width:1px;height:22.95px;background:#eff0f3"></div>
<div class="a" style="left:443.6px;top:423.80px;width:1px;height:22.95px;background:#eff0f3"></div>
<div class="a" style="left:596.7px;top:423.80px;width:1px;height:22.95px;background:#eff0f3"></div>
<div class="a" style="left:749.8px;top:423.80px;width:1px;height:22.95px;background:#eff0f3"></div>
<div class="a" style="left:902.8px;top:423.80px;width:1px;height:22.95px;background:#eff0f3"></div>
<div class="a" style="left:1075.8px;top:423.80px;width:1px;height:22.95px;background:#eff0f3"></div>
<div class="t num" style="left:222px;top:432.47px">2.6</div>
<div class="t nm" style="left:251.4px;top:430.67px">开展预售票务工作</div>
<div class="a bar" style="left:455.8px;top:430.07px;width:129.7px"><div class="fill" style="width:100.0%"></div><div class="bt">5 天</div></div>
<div class="a bar" style="left:609.0px;top:430.07px;width:129.7px"><div class="fill" style="width:21.0%"></div><div class="bt">25/3/6 - 25/3/19</div></div>
<div class="a stg" style="left:751px;top:425.00px;width:151.2px;height:21.25px;background:#9bd127">推广执行</div>
<div class="t pre" style="left:909px;top:430.67px;width:166px;overflow:hidden">与媒体合作进行报道</div>
<div class="a" style="left:212.5px;top:446.25px;width:919.5px;height:1px;background:#eceef3"></div>
<div class="a" style="left:208.4px;top:309.55px;width:4.1px;height:137.20px;background:#8fcc2a;border-radius:3px 0 0 3px"></div>
<svg width="9" height="5" viewBox="0 0 9 5" style="left:220.7px;top:459.82px"><path d="M0.6 0.6L4.5 4.2L8.4 0.6" fill="none" stroke="#177c4b" stroke-width="1.2"/></svg>
<div class="t gh" style="left:238.3px;top:457.22px;color:#177c4b">3. 项目准备&nbsp;&nbsp;<span class="gn">(5)</span></div>
<div class="a" style="left:212.5px;top:476.80px;width:919.5px;height:1px;background:#eceef3"></div>
<div class="a" style="left:242.3px;top:477.30px;width:1px;height:22.95px;background:#eff0f3"></div>
<div class="a" style="left:443.6px;top:477.30px;width:1px;height:22.95px;background:#eff0f3"></div>
<div class="a" style="left:596.7px;top:477.30px;width:1px;height:22.95px;background:#eff0f3"></div>
<div class="a" style="left:749.8px;top:477.30px;width:1px;height:22.95px;background:#eff0f3"></div>
<div class="a" style="left:902.8px;top:477.30px;width:1px;height:22.95px;background:#eff0f3"></div>
<div class="a" style="left:1075.8px;top:477.30px;width:1px;height:22.95px;background:#eff0f3"></div>
<div class="t num" style="left:222px;top:485.97px">3.1</div>
<div class="t nm" style="left:251.4px;top:484.17px">确定展会活动目标与主题</div>
<div class="a bar" style="left:455.8px;top:483.57px;width:129.7px"><div class="fill" style="width:0.0%"></div><div class="bt">1 天</div></div>
<div class="a bar" style="left:609.0px;top:483.57px;width:129.7px"><div class="fill" style="width:100.0%"></div><div class="bt">25/2/9 - 25/2/11</div></div>
<div class="a stg" style="left:751px;top:478.50px;width:151.2px;height:21.25px;background:#017c4b">项目准备</div>
<div class="t pre" style="left:909px;top:484.17px;width:166px;overflow:hidden">开展预售票务工作</div>
<div class="a" style="left:212.5px;top:499.75px;width:919.5px;height:1px;background:#eceef3"></div>
<div class="a" style="left:242.3px;top:500.25px;width:1px;height:22.95px;background:#eff0f3"></div>
<div class="a" style="left:443.6px;top:500.25px;width:1px;height:22.95px;background:#eff0f3"></div>
<div class="a" style="left:596.7px;top:500.25px;width:1px;height:22.95px;background:#eff0f3"></div>
<div class="a" style="left:749.8px;top:500.25px;width:1px;height:22.95px;background:#eff0f3"></div>
<div class="a" style="left:902.8px;top:500.25px;width:1px;height:22.95px;background:#eff0f3"></div>
<div class="a" style="left:1075.8px;top:500.25px;width:1px;height:22.95px;background:#eff0f3"></div>
<div class="t num" style="left:222px;top:508.92px">3.2</div>
<svg width="6" height="9" viewBox="0 0 6 9" style="left:251.8px;top:507.42px"><path d="M0.8 0.7L4.8 4.5L0.8 8.3" fill="none" stroke="#444" stroke-width="1.2"/></svg>
<div class="t nm" style="left:270.2px;top:507.12px">制定预算计划</div>
<div class="a bar" style="left:455.8px;top:506.52px;width:129.7px"><div class="fill" style="width:0.0%"></div><div class="bt">2 天</div></div>
<div class="a bar" style="left:609.0px;top:506.52px;width:129.7px"><div class="fill" style="width:100.0%"></div><div class="bt">25/2/12 - 25/2/13</div></div>
<div class="a stg" style="left:751px;top:501.45px;width:151.2px;height:21.25px;background:#017c4b">项目准备</div>
<div class="t pre" style="left:909px;top:507.12px;width:166px;overflow:hidden">确定展会活动目标与主题</div>
<div class="t tm" style="left:1081.5px;top:507.32px">01:30</div>
<div class="a" style="left:212.5px;top:522.70px;width:919.5px;height:1px;background:#eceef3"></div>
<div class="a" style="left:242.3px;top:523.20px;width:1px;height:22.95px;background:#eff0f3"></div>
<div class="a" style="left:443.6px;top:523.20px;width:1px;height:22.95px;background:#eff0f3"></div>
<div class="a" style="left:596.7px;top:523.20px;width:1px;height:22.95px;background:#eff0f3"></div>
<div class="a" style="left:749.8px;top:523.20px;width:1px;height:22.95px;background:#eff0f3"></div>
<div class="a" style="left:902.8px;top:523.20px;width:1px;height:22.95px;background:#eff0f3"></div>
<div class="a" style="left:1075.8px;top:523.20px;width:1px;height:22.95px;background:#eff0f3"></div>
<div class="t num" style="left:222px;top:531.88px">3.3</div>
<svg width="6" height="9" viewBox="0 0 6 9" style="left:251.8px;top:530.38px"><path d="M0.8 0.7L4.8 4.5L0.8 8.3" fill="none" stroke="#444" stroke-width="1.2"/></svg>
<div class="t nm" style="left:270.2px;top:530.07px">组建项目团队</div>
<div class="a bar" style="left:455.8px;top:529.47px;width:129.7px"><div class="fill" style="width:0.0%"></div><div class="bt">4 天</div></div>
<div class="a bar" style="left:609.0px;top:529.47px;width:129.7px"><div class="fill" style="width:100.0%"></div><div class="bt">25/2/12 - 25/2/16</div></div>
<div class="a stg" style="left:751px;top:524.40px;width:151.2px;height:21.25px;background:#017c4b">项目准备</div>
<div class="t pre" style="left:909px;top:530.07px;width:166px;overflow:hidden">确定展会活动目标与主题</div>
<div class="a" style="left:212.5px;top:545.65px;width:919.5px;height:1px;background:#eceef3"></div>
<div class="a" style="left:242.3px;top:546.15px;width:1px;height:22.95px;background:#eff0f3"></div>
<div class="a" style="left:443.6px;top:546.15px;width:1px;height:22.95px;background:#eff0f3"></div>
<div class="a" style="left:596.7px;top:546.15px;width:1px;height:22.95px;background:#eff0f3"></div>
<div class="a" style="left:749.8px;top:546.15px;width:1px;height:22.95px;background:#eff0f3"></div>
<div class="a" style="left:902.8px;top:546.15px;width:1px;height:22.95px;background:#eff0f3"></div>
<div class="a" style="left:1075.8px;top:546.15px;width:1px;height:22.95px;background:#eff0f3"></div>
<div class="t num" style="left:222px;top:554.83px">3.4</div>
<div class="t nm" style="left:251.4px;top:553.02px">选择合适的展会场地与日期</div>
<div class="a bar" style="left:455.8px;top:552.42px;width:129.7px"><div class="fill" style="width:0.0%"></div><div class="bt">5 天</div></div>
<div class="a bar" style="left:609.0px;top:552.42px;width:129.7px"><div class="fill" style="width:100.0%"></div><div class="bt">25/2/17 - 25/2/23</div></div>
<div class="a stg" style="left:751px;top:547.35px;width:151.2px;height:21.25px;background:#017c4b">项目准备</div>
<div class="t pre" style="left:909px;top:553.02px;width:166px;overflow:hidden">制定预算计划&nbsp;&nbsp;组建项目团队</div>
<div class="a" style="left:212.5px;top:568.60px;width:919.5px;height:1px;background:#eceef3"></div>
<div class="a" style="left:242.3px;top:569.10px;width:1px;height:22.95px;background:#eff0f3"></div>
<div class="a" style="left:443.6px;top:569.10px;width:1px;height:22.95px;background:#eff0f3"></div>
<div class="a" style="left:596.7px;top:569.10px;width:1px;height:22.95px;background:#eff0f3"></div>
<div class="a" style="left:749.8px;top:569.10px;width:1px;height:22.95px;background:#eff0f3"></div>
<div class="a" style="left:902.8px;top:569.10px;width:1px;height:22.95px;background:#eff0f3"></div>
<div class="a" style="left:1075.8px;top:569.10px;width:1px;height:22.95px;background:#eff0f3"></div>
<div class="t num" style="left:222px;top:577.78px">3.5</div>
<svg width="6" height="9" viewBox="0 0 6 9" style="left:251.8px;top:576.28px"><path d="M0.8 0.7L4.8 4.5L0.8 8.3" fill="none" stroke="#444" stroke-width="1.2"/></svg>
<div class="t nm" style="left:270.2px;top:575.98px">确认参展商及合作伙伴名单</div>
<div class="a bar" style="left:455.8px;top:575.38px;width:129.7px"><div class="fill" style="width:0.0%"></div><div class="bt">9 天</div></div>
<div class="a bar" style="left:609.0px;top:575.38px;width:129.7px"><div class="fill" style="width:100.0%"></div><div class="bt">25/2/24 - 25/3/5</div></div>
<div class="a stg" style="left:751px;top:570.30px;width:151.2px;height:21.25px;background:#017c4b">项目准备</div>
<div class="t pre" style="left:909px;top:575.98px;width:166px;overflow:hidden">选择合适的展会场地与日期</div>
<div class="a" style="left:212.5px;top:591.55px;width:919.5px;height:1px;background:#eceef3"></div>
<div class="a" style="left:208.4px;top:477.80px;width:4.1px;height:114.25px;background:#0f7a47;border-radius:3px 0 0 3px"></div>
<svg width="9" height="5" viewBox="0 0 9 5" style="left:220.7px;top:605.12px"><path d="M0.6 0.6L4.5 4.2L8.4 0.6" fill="none" stroke="#c4a93a" stroke-width="1.2"/></svg>
<div class="t gh" style="left:238.3px;top:602.53px;color:#c4a93a">4. 活动运营&nbsp;&nbsp;<span class="gn">(4)</span></div>
<div class="a" style="left:212.5px;top:622.10px;width:919.5px;height:1px;background:#eceef3"></div>
<div class="a" style="left:242.3px;top:622.60px;width:1px;height:22.95px;background:#eff0f3"></div>
<div class="a" style="left:443.6px;top:622.60px;width:1px;height:22.95px;background:#eff0f3"></div>
<div class="a" style="left:596.7px;top:622.60px;width:1px;height:22.95px;background:#eff0f3"></div>
<div class="a" style="left:749.8px;top:622.60px;width:1px;height:22.95px;background:#eff0f3"></div>
<div class="a" style="left:902.8px;top:622.60px;width:1px;height:22.95px;background:#eff0f3"></div>
<div class="a" style="left:1075.8px;top:622.60px;width:1px;height:22.95px;background:#eff0f3"></div>
<div class="t num" style="left:222px;top:631.28px">4.1</div>
<div class="t nm" style="left:251.4px;top:629.48px">参展商入场指导</div>
<div class="a bar" style="left:455.8px;top:628.88px;width:129.7px"><div class="fill" style="width:100.0%"></div><div class="bt">1 天</div></div>
<div class="a bar" style="left:609.0px;top:628.88px;width:129.7px"><div class="fill" style="width:100.0%"></div><div class="bt">25/2/25 - 25/2/25</div></div>
<div class="a stg" style="left:751px;top:623.80px;width:151.2px;height:21.25px;background:#c8b43c">活动运营</div>
<div class="t pre" style="left:909px;top:629.48px;width:166px;overflow:hidden">场地布置与设施检查</div>
<div class="a" style="left:212.5px;top:645.05px;width:919.5px;height:1px;background:#eceef3"></div>
<div class="a" style="left:208.4px;top:623.10px;width:4.1px;height:22.45px;background:#c9b13c;border-radius:3px 0 0 3px"></div>
</div>
<div class="a" style="left:1132.2px;top:134px;width:5.8px;height:345.3px;border-radius:3px;background:#c6c7ca"></div>
<div class="a" style="left:597.2px;top:635.4px;width:225.2px;height:5px;border-radius:3px;background:#c6c7ca"></div>
<!--/TABLE-->


</body></html>
